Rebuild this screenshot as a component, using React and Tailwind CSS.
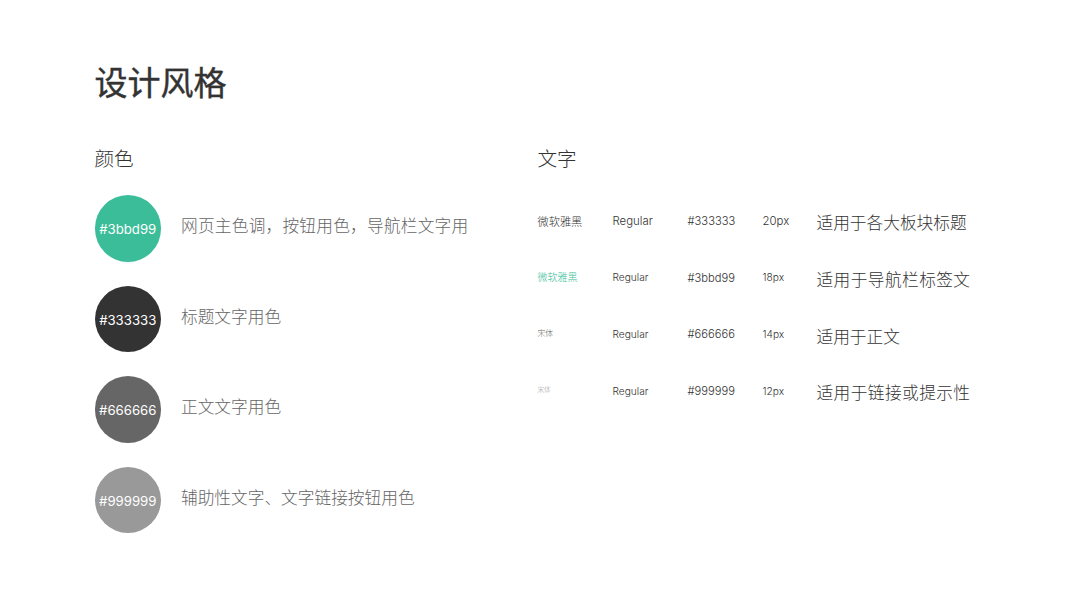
const colors = [
  { hex: "#3bbd99", bg: "bg-[#3bbd99]", label: "网页主色调，按钮用色，导航栏文字用", labelClass: "tracking-[0.22px]" },
  { hex: "#333333", bg: "bg-[#333333]", label: "标题文字用色", labelClass: "" },
  { hex: "#666666", bg: "bg-[#666666]", label: "正文文字用色", labelClass: "" },
  { hex: "#999999", bg: "bg-[#999999]", label: "辅助性文字、文字链接按钮用色", labelClass: "" },
];

const fonts = [
  { name: "微软雅黑", nameClass: "text-[11.2px] text-[#333333] mb-[1px]", reg: "text-[11.4px]", hex: "#333333", size: "20px", sizeClass: "text-[11.4px]", use: "适用于各大板块标题", useClass: "" },
  { name: "微软雅黑", nameClass: "text-[10px] text-[#3bbd99] mb-[5px]", reg: "text-[10.2px]", hex: "#3bbd99", size: "18px", sizeClass: "text-[10.2px]", use: "适用于导航栏标签文", useClass: "tracking-[0.42px]" },
  { name: "宋体", nameClass: "text-[7.8px] text-[#666666] mb-[5px]", reg: "text-[10.2px]", hex: "#666666", size: "14px", sizeClass: "text-[10.2px]", use: "适用于正文", useClass: "" },
  { name: "宋体", nameClass: "text-[6.6px] text-[#999999] mb-[4px]", reg: "text-[10.2px]", hex: "#999999", size: "12px", sizeClass: "text-[10.2px]", use: "适用于链接或提示性", useClass: "tracking-[0.42px]" },
];

const sans = "font-['Inter','Noto_Sans_CJK_SC',sans-serif]";

export default function App() {
  return (
    <div className={`w-[1067px] h-[600px] bg-white pl-[94.5px] pt-[62px] text-[#333333] ${sans}`}>
      <h1 className="text-[33px] leading-[42px] font-normal [-webkit-text-stroke:0.4px_#333333]">设计风格</h1>

      <div className="flex mt-[41px]">
        {/* 颜色 */}
        <div className="w-[443px]">
          <h2 className="text-[19.6px] leading-[28px] font-light">颜色</h2>
          <div className="flex flex-col gap-[24px] mt-[22px]">
            {colors.map((c) => (
              <div key={c.hex} className="flex items-center gap-[20px]">
                <div className={`w-[66.5px] h-[66.5px] rounded-full flex items-center justify-center text-white text-[13.2px] pt-[4px] ${c.bg}`}>
                  {c.hex}
                </div>
                <p className={`text-[16.7px] leading-[24px] font-light text-[#666666] mb-[4px] ${c.labelClass}`}>{c.label}</p>
              </div>
            ))}
          </div>
        </div>

        {/* 文字 */}
        <div>
          <h2 className="text-[19.6px] leading-[28px] font-light">文字</h2>
          <div className="flex flex-col gap-[32.6px] mt-[38px]">
            {fonts.map((f) => (
              <div key={f.hex} className="flex items-center h-[24px] text-[#333333]">
                <div className={`w-[75px] font-light ${f.nameClass}`}>{f.name}</div>
                <div className={`w-[75px] font-light mb-[3px] ${f.reg}`}>Regular</div>
                <div className="w-[75px] text-[11.2px] font-light mb-[3px]">{f.hex}</div>
                <div className={`w-[54px] font-light mb-[3px] ${f.sizeClass}`}>{f.size}</div>
                <div className={`text-[16.7px] font-light pt-[2px] ${f.useClass}`}>{f.use}</div>
              </div>
            ))}
          </div>
        </div>
      </div>
    </div>
  );
}
